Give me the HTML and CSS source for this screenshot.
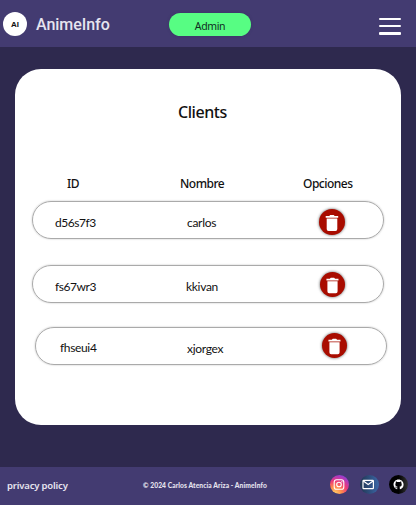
FILE: index.html
```html
<!DOCTYPE html>
<html lang="es">
<head>
<meta charset="utf-8">
<title>AnimeInfo - Clients</title>
<link rel="stylesheet" href="styles.css">
</head>
<body>
<svg class="symbols" aria-hidden="true">
  <symbol id="trash" viewBox="0 0 26 26">
    <path fill="#fff" d="M6.700 7h3.500l1-1h3.500l1 1H19.200v1.800H6.700zM7.700 9.600h10.600V20q0 2-1.800 2H9.500q-1.800 0-1.800-2z"/>
  </symbol>
</svg>
<header class="topbar">
  <div class="logo"><span>AI</span></div>
  <div class="brand">AnimeInfo</div>
  <button class="admin">Admin</button>
  <div class="menu"><i></i><i></i><i></i></div>
</header>
<main>
  <section class="card">
    <h1><span>Clients</span></h1>
    <div class="heads"><span class="h-id">ID</span><span class="h-name">Nombre</span><span class="h-options">Opciones</span></div>
    <div class="row first"><span class="id">d56s7f3</span><span class="name">carlos</span><span class="delete"><svg><use href="#trash"/></svg></span></div>
    <div class="row second"><span class="id">fs67wr3</span><span class="name">kkivan</span><span class="delete"><svg><use href="#trash"/></svg></span></div>
    <div class="row third"><span class="id">fhseui4</span><span class="name">xjorgex</span><span class="delete"><svg><use href="#trash"/></svg></span></div>
  </section>
</main>
<footer>
  <a class="privacy">privacy policy</a>
  <span class="copy">© 2024 Carlos Atencia Ariza - AnimeInfo</span>
  <div class="social">
    <span class="instagram"><svg viewBox="0 0 19 19" fill="none" stroke="#fff" stroke-width="1.1"><rect x="4.200" y="4.700" width="9.600" height="9.600" rx="2.400"/><circle cx="9" cy="9.500" r="2.300"/><circle cx="11.800" cy="6.800" r=".2"/></svg></span>
    <span class="mail"><svg viewBox="0 0 19 19" fill="none" stroke="#fff" stroke-width="1.200"><rect x="3" y="5.300" width="10.400" height="8.400" rx=".6"/><path d="M3.300 6l4.900 3.600L13.100 6"/></svg></span>
    <span class="github"><svg viewBox="0 0 19 19"><path fill="#fff" transform="translate(4.500 4.500) scale(.63)" d="M8 0C3.580 0 0 3.580 0 8c0 3.540 2.290 6.530 5.470 7.590.4.070.55-.17.55-.38v-1.490c-2.010.37-2.530-.49-2.690-.94-.09-.23-.48-.94-.82-1.130-.28-.15-.68-.52-.01-.53.63-.01 1.080.58 1.230.82.72 1.210 1.870.87 2.330.66.070-.52.280-.87.510-1.070-1.780-.2-3.640-.89-3.640-3.950 0-.87.310-1.590.82-2.150-.08-.2-.36-1.020.08-2.120 0 0 .67-.21 2.200.82a7.400 7.400 0 0 1 4 0c1.530-1.040 2.200-.82 2.200-.82.44 1.100.16 1.920.08 2.120.51.560.82 1.270.82 2.150 0 3.070-1.870 3.750-3.650 3.950.29.250.54.730.54 1.480v2.200c0 .21.150.46.55.38A8 8 0 0 0 16 8c0-4.420-3.580-8-8-8z"/></svg></span>
  </div>
</footer>
</body>
</html>
```
FILE: styles.css
```css
* { box-sizing: border-box; }
body {
  margin: 0;
  width: 416px;
  height: 505px;
  overflow: hidden;
  background: #2e294e;
  font-family: "Noto Sans", sans-serif;
  color: #111;
  white-space: nowrap;
}
.symbols { display: none; }
.topbar {
  height: 47px;
  background: #433b71;
  display: flex;
  align-items: flex-start;
}
.logo {
  width: 24px;
  height: 24px;
  margin: 12px 0 0 3px;
  border-radius: 50%;
  background: #fff;
  font: 900 8px/25px "Liberation Sans", sans-serif;
  text-align: center;
}
.brand {
  width: 133px;
  margin: 15px 0 0 9px;
  font: 500 16px/20px Roboto, sans-serif;
  letter-spacing: -.05px;
  color: #e6e4ef;
}
.admin {
  width: 82px;
  height: 23px;
  margin: 13px 0 0;
  padding: 2px 0 0;
  border: 0;
  border-radius: 12px;
  background: #57fd83;
  box-shadow: 0 0 3px #302b5366;
  font: 10.500px/20px "Noto Sans", sans-serif;
  letter-spacing: -.35px;
  color: #112d22;
}
.menu {
  display: flex;
  flex-direction: column;
  gap: 5px;
  margin: 18px 0 0 127.500px;
}
.menu i {
  width: 22px;
  height: 2.200px;
  border-radius: 1px;
  background: #fff;
}
main { height: 420px; padding: 22px 15px 0; }
.card {
  height: 356px;
  border-radius: 26px;
  background: #fff;
  overflow: hidden;
}
h1 {
  margin: 31px 0 0 163px;
  font: 500 16px/24px "Noto Sans", sans-serif;
  letter-spacing: -.45px;
}
.heads {
  display: flex;
  margin: 50px 0 0;
  font-size: 12px;
  font-weight: 500;
  line-height: 20px;
  letter-spacing: -.5px;
}
.h-id { width: 113px; margin-left: 52px; }
.h-name { width: 123px; }
.row {
  width: 352px;
  height: 38px;
  border: 1px solid #aaa;
  border-radius: 19px;
  box-shadow: 0 0 2px #0004;
  display: flex;
  align-items: flex-start;
  font: 12px/18px Lato, sans-serif;
  letter-spacing: -.45px;
}
.first { margin: 7px 0 0 17px; }
.second { margin: 26px 0 0 17px; }
.third { margin: 24px 0 0 20px; }
.id { width: 132px; margin: 12px 0 0 22px; }
.name { width: 132px; margin-top: 12px; letter-spacing: -.3px; }
.second .id { width: 131px; }
.second .name { width: 133px; }
.third .id { width: 127px; margin: 11px 0 0 24px; letter-spacing: -.35px; }
.third .name { width: 134px; margin-top: 12px; }
.delete {
  width: 26px;
  height: 26px;
  margin-top: 7px;
  border-radius: 50%;
  background: #a90c00;
  box-shadow: 0 0 3px #000a;
}
.delete svg { display: block; width: 100%; height: 100%; }
.second .delete, .third .delete { width: 25px; height: 25px; margin: 6px 0 0 1px; }
.third .delete { margin-top: 5px; }
footer {
  height: 38px;
  background: #433b71;
  display: flex;
  align-items: flex-start;
  color: #e6e4ef;
}
.privacy {
  width: 136px;
  margin: 11px 0 0 7px;
  font: 600 9.500px/16px "Noto Sans", sans-serif;
  letter-spacing: -.17px;
}
.copy {
  width: 187px;
  margin-top: 12px;
  font: 900 6.700px/12px Lato, sans-serif;
  letter-spacing: .08px;
}
.social { display: flex; gap: 10.500px; margin-top: 8px; }
.social span { width: 19px; height: 19px; border-radius: 50%; overflow: hidden; }
.social svg { display: block; width: 19px; height: 19px; }
.instagram { background: radial-gradient(circle at 25% 100%, #ffd66b 0, #ff8a4c 30%, #ed3b78 55%, #a63ac5 78%, #554ee0 100%); }
.mail { background: linear-gradient(90deg, #203651, #3c67a8); }
.github { background: linear-gradient(90deg, #000 50%, #333); }
```
